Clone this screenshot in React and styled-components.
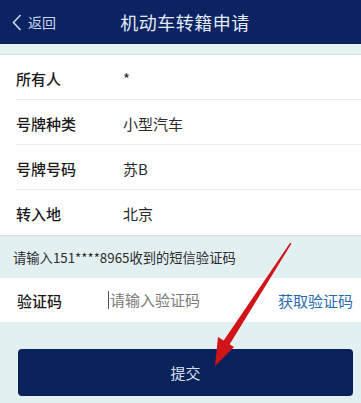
import React from "react";
import styled, { createGlobalStyle } from "styled-components";

const GlobalStyle = createGlobalStyle`
  html, body {
    margin: 0;
    padding: 0;
    background: #e3f0f2;
  }
  body {
    font-family: "Noto Sans CJK SC", "Liberation Sans", sans-serif;
  }
`;

const Page = styled.div`
  position: relative;
  width: 361px;
  height: 403px;
  overflow: hidden;
  background: #e3f0f2;
`;

const Header = styled.div`
  position: relative;
  height: 44px;
  background: #0b2362;
  display: flex;
  align-items: center;
  justify-content: center;
`;

const Back = styled.div`
  position: absolute;
  left: 12px;
  top: 0;
  bottom: 0;
  display: flex;
  align-items: center;
  gap: 6px;
  color: #c9d6ea;
  font-size: 14px;
`;

const Title = styled.div`
  color: #e4ebf5;
  font-size: 18px;
  padding-left: 9px;
  letter-spacing: 0.5px;
`;

const Strip = styled.div`
  height: 10px;
  background: #e6f1f1;
  border-bottom: 1px solid #d7dede;
`;

const List = styled.div`
  background: #fff;
`;

const Row = styled.div`
  height: 45px;
  display: flex;
  align-items: center;
  margin-left: 16px;
  border-bottom: ${(p) => (p.last ? "none" : "1px solid #e8eded")};
  font-size: 15px;
  padding-top: 2px;
  box-sizing: border-box;
`;

const Label = styled.div`
  width: 107px;
  color: #1a1a1a;
  font-weight: 500;
`;

const Value = styled.div`
  color: #2b2b2b;
`;

const Notice = styled.div`
  height: 42px;
  display: flex;
  align-items: center;
  padding-left: 13px;
  font-size: 13.3px;
  color: #2c2c2c;
  border-top: 1px solid #d9e0e0;
`;

const CodeRow = styled.div`
  height: 44px;
  background: #fff;
  display: flex;
  align-items: center;
  padding: 0 8px 0 17px;
  font-size: 15px;
`;

const CodeLabel = styled.div`
  width: 91px;
  color: #1a1a1a;
  font-weight: 500;
`;

const Placeholder = styled.div`
  flex: 1;
  color: #7a7a7a;
  border-left: 1px solid #555;
  padding-left: 1px;
  line-height: 18px;
`;

const GetCode = styled.div`
  color: #2a6bb0;
`;

const Footer = styled.div`
  padding: 27px 8px 0 18px;
`;

const Submit = styled.div`
  height: 47px;
  border-radius: 4px;
  background: #0a2259;
  color: #d5e1f0;
  font-size: 15px;
  display: flex;
  align-items: center;
  justify-content: center;
`;

const Arrow = styled.svg`
  position: absolute;
  left: 0;
  top: 0;
  pointer-events: none;
`;

const rows = [
  ["所有人", "*"],
  ["号牌种类", "小型汽车"],
  ["号牌号码", "苏B"],
  ["转入地", "北京"],
];

export default function App() {
  return (
    <Page>
      <GlobalStyle />
      <Header>
        <Back>
          <svg width="10" height="17" viewBox="0 0 10 17">
            <path d="M8.5 1 L1.5 8.5 L8.5 16" fill="none" stroke="#c9d6ea" strokeWidth="1.6" />
          </svg>
          返回
        </Back>
        <Title>机动车转籍申请</Title>
      </Header>
      <Strip />
      <List>
        {rows.map(([label, value], i) => (
          <Row key={label} last={i === rows.length - 1}>
            <Label>{label}</Label>
            <Value>{value}</Value>
          </Row>
        ))}
      </List>
      <Notice>请输入151****8965收到的短信验证码</Notice>
      <CodeRow>
        <CodeLabel>验证码</CodeLabel>
        <Placeholder>请输入验证码</Placeholder>
        <GetCode>获取验证码</GetCode>
      </CodeRow>
      <Footer>
        <Submit>提交</Submit>
      </Footer>
      <Arrow width="361" height="403" viewBox="0 0 361 403">
        <path d="M290 243 L291.5 243.5 L228 347 L222 343 Z" fill="#d0141a" />
        <path d="M215 366 L218 337 L234 347 Z" fill="#d0141a" />
      </Arrow>
    </Page>
  );
}
